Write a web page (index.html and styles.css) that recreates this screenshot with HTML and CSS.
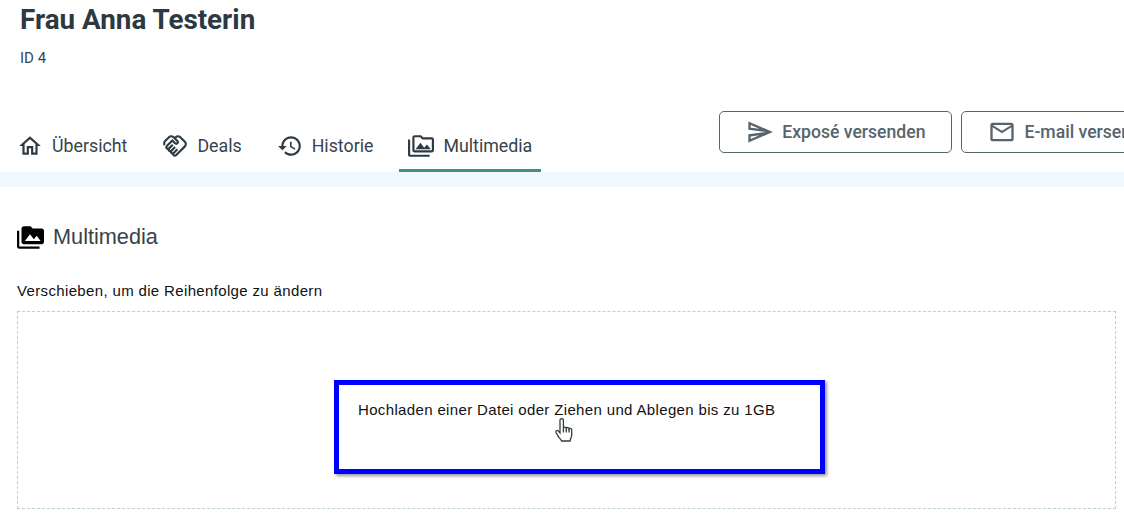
FILE: index.html
```html
<!DOCTYPE html>
<html lang="de">
<head>
<meta charset="utf-8">
<title>Multimedia</title>
<link rel="stylesheet" href="styles.css">
</head>
<body>
<header class="head">
  <h1 class="name">Frau Anna Testerin</h1>
  <p class="id">ID 4</p>
  <div class="bar">
    <nav class="tabs">
      <a class="tab"><svg class="ico" viewBox="0 0 24 24"><path d="M12 5.69l5 4.5V18h-2v-6H9v6H7v-7.81l5-4.5M12 3L2 12h3v8h6v-6h2v6h6v-8h3L12 3z"/></svg>Übersicht</a>
      <a class="tab"><svg class="ico" viewBox="0 0 24 24"><path d="M12.22 19.85c-.18.18-.5.21-.71 0-.18-.18-.21-.5 0-.71l3.39-3.39-1.41-1.41-3.39 3.39c-.19.2-.51.19-.71 0-.21-.21-.18-.53 0-.71l3.39-3.39-1.41-1.41-3.39 3.39c-.18.18-.5.21-.71 0-.19-.19-.19-.51 0-.71l3.39-3.39-1.42-1.41-3.39 3.39c-.18.18-.5.21-.71 0-.19-.2-.19-.51 0-.71L9.52 8.4l1.87 1.86c.95.95 2.59.94 3.54 0 .98-.98.98-2.56 0-3.54l-1.86-1.86.28-.28c.78-.78 2.05-.78 2.83 0l4.24 4.24c.78.78.78 2.05 0 2.83l-8.2 8.2zm9.61-6.78c1.56-1.56 1.56-4.09 0-5.66l-4.24-4.24c-1.56-1.56-4.09-1.56-5.66 0l-.28.28-.28-.28c-1.56-1.56-4.09-1.56-5.66 0L2.17 6.71c-1.42 1.42-1.55 3.63-.4 5.19l1.45-1.45c-.39-.75-.26-1.7.37-2.33l3.54-3.54c.78-.78 2.05-.78 2.83 0l3.56 3.56c.18.18.21.5 0 .71-.21.21-.53.18-.71 0L9.52 5.57l-5.8 5.79c-.98.97-.98 2.56 0 3.54.39.39.89.63 1.42.7.07.52.3 1.02.7 1.42.4.4.9.63 1.42.7.07.52.3 1.02.7 1.42.4.4.9.63 1.42.7.07.54.31 1.03.7 1.42.47.47 1.1.73 1.77.73.67 0 1.3-.26 1.77-.73l8.21-8.19z"/></svg>Deals</a>
      <a class="tab"><svg class="ico" viewBox="0 0 24 24"><path d="M13 3c-4.97 0-9 4.03-9 9H1l3.89 3.89.07.14L9 12H6c0-3.87 3.13-7 7-7s7 3.13 7 7-3.13 7-7 7c-1.93 0-3.68-.79-4.94-2.06l-1.42 1.42C8.27 19.99 10.51 21 13 21c4.97 0 9-4.03 9-9s-4.03-9-9-9zm-1 5v5l4.28 2.54.72-1.21-3.5-2.08V8H12z"/></svg>Historie</a>
      <a class="tab active"><svg class="ico" viewBox="0 0 24 24"><path d="M2 6H0v5h.01L0 20c0 1.1.9 2 2 2h18v-2H2V6zm5 9h14l-3.5-4.5-2.5 3.01L11.5 9zM22 4h-8l-2-2H6c-1.1 0-1.99.9-1.99 2L4 16c0 1.1.9 2 2 2h16c1.1 0 2-.9 2-2V6c0-1.1-.9-2-2-2zm0 12H6V4h5.17l1.41 1.41.59.59H22v10z"/></svg>Multimedia</a>
    </nav>
    <div class="actions">
      <button class="btn"><svg class="ico" viewBox="0 0 24 24"><path d="M4.01 6.03l7.51 3.22-7.52-1 .01-2.22m7.5 8.72L4 17.97v-2.22l7.51-1M2.01 3L2 10l15 2-15 2 .01 7L23 12 2.01 3z"/></svg>Exposé versenden</button>
      <button class="btn"><svg class="ico" viewBox="0 0 24 24"><path d="M22 6c0-1.1-.9-2-2-2H4c-1.1 0-2 .9-2 2v12c0 1.1.9 2 2 2h16c1.1 0 2-.9 2-2V6zm-2 0l-8 5-8-5h16zm0 12H4V8l8 5 8-5v10z"/></svg>E-mail versenden</button>
    </div>
  </div>
</header>
<div class="band"></div>
<main class="content">
  <h2 class="section"><svg class="ico" viewBox="0 0 24 24"><path d="M2 6H0v5h.01L0 20c0 1.1.9 2 2 2h18v-2H2V6zm20-2h-8l-2-2H6c-1.1 0-1.99.9-1.99 2L4 16c0 1.1.9 2 2 2h16c1.1 0 2-.9 2-2V6c0-1.1-.9-2-2-2zM7 15l4.5-6 3.5 4.51 2.5-3.01L21 15H7z"/></svg>Multimedia</h2>
  <p class="hint">Verschieben, um die Reihenfolge zu ändern</p>
  <div class="drop">
    <div class="callout">Hochladen einer Datei oder Ziehen und Ablegen bis zu 1GB</div>
    <svg class="hand" viewBox="0.3 0 17 24"><path d="M4.8 2c0-1.7 3.4-1.7 3.4 0v8c.4-1.2 2.6-1.2 2.9.3.4-1.2 2.6-1 2.8.6.5-1 2.6-.7 2.6.9v5.2c0 1.6-.5 2.8-1.2 3.8l-.4 2.2H6.4c-.6-1.6-1.7-2.6-3-4L.9 14.6c-.8-1.5 1-2.8 2.2-1.7l1.7 2z"/><path class="lines" d="M8.2 10v4.5M11.1 10.5v4M13.9 11v3.5"/></svg>
  </div>
</main>
</body>
</html>
```
FILE: styles.css
```css
* { box-sizing: border-box; }
html, body { margin: 0; height: 518px; overflow: hidden; background: #fff; }
body { width: 1124px; font-family: Roboto, sans-serif; color: #2f3b43; }
.head { padding-left: 20px; height: 172px; }
.name { margin: 0; font-size: 27.8px; line-height: 40px; font-weight: 700; color: #2d3840; }
.id { margin: 8px 0 0; font-size: 15px; line-height: 20px; color: #37474f; }
.bar { display: flex; margin-top: 34px; height: 70px; }
.tabs { display: flex; flex: none; align-items: flex-end; gap: 17px; margin-left: -12px; height: 70px; }
.tab { display: flex; align-items: center; height: 42px; padding: 0 9px 8px; font-size: 17.8px; color: #36434c; border-bottom: 3px solid transparent; }
.tab .ico { fill: #2f3b43; margin-right: 9px; }
.tab.active { border-bottom-color: #3f8f84; }
.ico { width: 26px; height: 26px; flex: none; }
.actions { display: flex; flex: none; gap: 9px; margin: 9px 0 0 178px; align-self: flex-start; }
.btn { display: flex; align-items: center; height: 42px; padding: 0 26px; background: #fff; border: 1px solid #56646e; border-radius: 5px; font: 500 17.6px Roboto, sans-serif; color: #56646e; white-space: nowrap; }
.btn .ico { width: 28px; height: 28px; fill: #56646e; margin-right: 8px; }
.band { height: 15px; background: #f0f7fd; }
.content { padding: 35px 8px 0 17px; }
.section { display: flex; align-items: center; gap: 9px; margin: 0; height: 30px; font: 400 21.7px "Liberation Sans", sans-serif; color: #37424a; }
.section .ico { width: 27px; height: 27px; fill: #000; }
.hint { margin: 30px 0 0; font: 15px/18px "Liberation Sans", sans-serif; letter-spacing: .35px; color: #111; }
.drop { position: relative; margin-top: 11px; height: 198px; width: 1099px; border: 1px dashed #bccfdb; }
.callout { position: absolute; left: 316px; top: 68px; width: 491px; height: 94px; padding: 16px 0 0 19px; border: 5px solid #00f; box-shadow: 2px 2px 3px rgba(0,0,0,.4); font: 15px/18px "Liberation Sans", sans-serif; letter-spacing: .35px; color: #111; background: #fff; white-space: nowrap; }
.hand { position: absolute; left: 537px; top: 106px; width: 18px; height: 24px; fill: #fff; stroke: #333c42; stroke-width: 1.3; }
.hand .lines { fill: none; }
```
